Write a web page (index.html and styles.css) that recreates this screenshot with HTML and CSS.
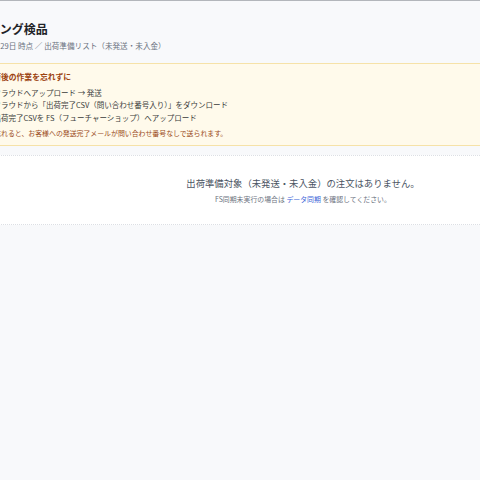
FILE: index.html
```html
<!DOCTYPE html>
<html lang="ja">
<head>
<meta charset="utf-8">
<title>ピッキング検品</title>
<link rel="stylesheet" href="styles.css">
</head>
<body>
<main class="page">
  <header class="page-head">
    <h1 class="title">ピッキング検品</h1>
    <p class="subtitle">2026年1月29日 時点 ／ 出荷準備リスト（未発送・未入金）</p>
  </header>

  <section class="notice">
    <h2 class="notice-title"><svg class="warn-icon" viewBox="0 0 16 16" aria-hidden="true"><path d="M8 1.5 15 14.5H1Z" fill="#d97706"/><path d="M8 6v4.2" stroke="#fff" stroke-width="1.6" stroke-linecap="round"/><circle cx="8" cy="12.4" r="0.9" fill="#fff"/></svg>出荷後の作業を忘れずに</h2>
    <ol class="steps">
      <li>クラウドへアップロード → 発送</li>
      <li>クラウドから「出荷完了CSV（問い合わせ番号入り）」をダウンロード</li>
      <li>出荷完了CSVを FS（フューチャーショップ）へアップロード</li>
    </ol>
    <p class="notice-note">※ 3を忘れると、お客様への発送完了メールが問い合わせ番号なしで送られます。</p>
  </section>

  <section class="empty-card">
    <p class="empty-main">出荷準備対象（未発送・未入金）の注文はありません。</p>
    <p class="empty-sub">FS同期未実行の場合は <a class="link" href="#">データ同期</a> を確認してください。</p>
  </section>
</main>
</body>
</html>
```

FILE: styles.css
```css
html, body {
  margin: 0;
  padding: 0;
}
body {
  background: #f8f9fb;
  border-top: 1px solid #b3b6bb;
  overflow: hidden;
  height: 479px;
  font-family: "Noto Sans CJK JP", "Noto Sans", sans-serif;
  color: #1f2328;
}
.page {
  width: 678px;
  margin-left: -60px;
  padding: 20px 24px 0;
}
.page-head {
  display: flex;
  flex-direction: column;
  gap: 4px;
}
.title {
  margin: 0;
  font-size: 12px;
  line-height: 16px;
  font-weight: 700;
  color: #1f2328;
}
.subtitle {
  margin: 0;
  font-size: 7.6px;
  line-height: 10px;
  color: #6b7280;
}
.notice {
  margin-top: 12px;
  background: #fffaeb;
  border: 1px solid #f6e2a8;
  padding: 6.5px 10px 7px;
}
.notice-title {
  margin: 0;
  display: flex;
  align-items: center;
  gap: 2.4px;
  font-size: 7.8px;
  line-height: 11px;
  font-weight: 700;
  color: #9c420f;
}
.warn-icon {
  width: 8px;
  height: 8px;
  flex: none;
}
.steps {
  margin: 5px 0 0;
  padding-left: 18.5px;
  font-size: 7.5px;
  line-height: 12.5px;
  color: #3a3a3a;
}
.notice-note {
  margin: 3.75px 0 0;
  font-size: 6.9px;
  line-height: 10px;
  color: #9a4a1a;
}
.empty-card {
  margin-top: 9px;
  background: #ffffff;
  border-top: 1px dotted #dcdfe4;
  border-bottom: 1px dotted #dcdfe4;
  padding: 21.5px 0 20px;
  text-align: center;
}
.empty-main {
  margin: 0;
  font-size: 9.35px;
  line-height: 13px;
  color: #4b5563;
}
.empty-sub {
  margin: 3.5px 0 0;
  font-size: 6.9px;
  line-height: 10px;
  color: #6b7280;
}
.link {
  color: #3b63d8;
  text-decoration: none;
}
```
